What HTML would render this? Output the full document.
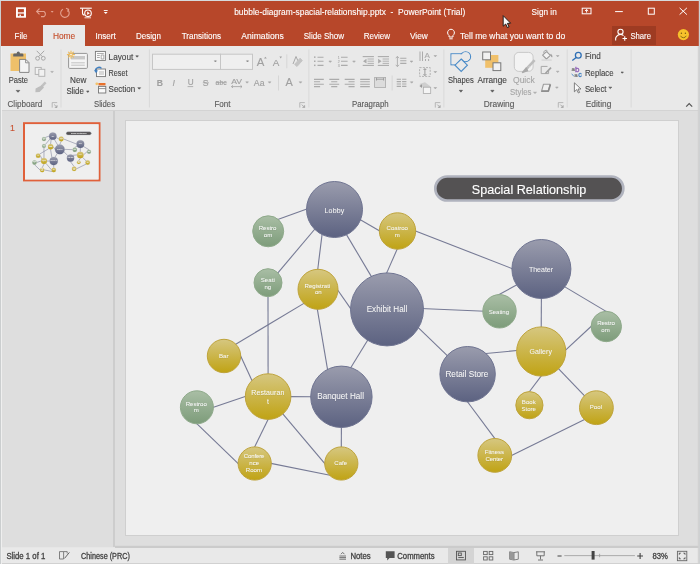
<!DOCTYPE html>
<html><head><meta charset="utf-8">
<style>
*{margin:0;padding:0}
html,body{width:700px;height:564px;overflow:hidden;background:#e6e6e6}
svg{position:absolute;left:0;top:0;display:block;will-change:transform}
text{font-family:"Liberation Sans",sans-serif}
</style></head><body>
<svg width="700" height="564" viewBox="0 0 700 564">
<defs>
<linearGradient id="gd" x1="0" y1="0" x2="0" y2="1"><stop offset="0" stop-color="#9a9cad"/><stop offset="1" stop-color="#5c6281"/></linearGradient>
<linearGradient id="gy" x1="0" y1="0" x2="0" y2="1"><stop offset="0" stop-color="#d6c780"/><stop offset="1" stop-color="#c0a314"/></linearGradient>
<linearGradient id="gg" x1="0" y1="0" x2="0" y2="1"><stop offset="0" stop-color="#a9bea5"/><stop offset="1" stop-color="#7d9c7a"/></linearGradient>
</defs>

<rect x="0" y="0" width="700" height="46" fill="#b7472a"/>
<rect x="0" y="46" width="700" height="64" fill="#e9e9e9"/>
<rect x="0" y="110" width="700" height="1" fill="#d3d3d3"/>
<rect x="0" y="111" width="700" height="436" fill="#dedede"/>
<rect x="0" y="111" width="113" height="436" fill="#dedede"/>
<rect x="113" y="111" width="2" height="436" fill="#cdcdcd"/>
<rect x="115" y="545.8" width="585" height="2.2" fill="#cbcbcb"/>
<rect x="0" y="548" width="700" height="16" fill="#e9e9e9"/>
<rect x="0" y="563.3" width="700" height="0.7" fill="#c8c8c8"/>
<rect x="697.8" y="46" width="1" height="518" fill="#d0d0d0"/>
<rect x="448" y="548" width="26" height="16" fill="#d4d4d4"/>
<rect x="125.5" y="120.5" width="553" height="415" fill="#efefef" stroke="#cfcfcf" stroke-width="1"/>
<rect x="0" y="0" width="1" height="564" fill="#cbcecf"/>
<rect x="1" y="46" width="1" height="518" fill="#efefef"/>
<rect x="0" y="0" width="700" height="1" fill="#d6dadc"/>
<rect x="698.8" y="0" width="1.2" height="564" fill="#cfd1d2"/>
<text x="234.2" y="14.9" font-size="8.8" fill="#fff" stroke="#fff" stroke-width="0.12" textLength="231" lengthAdjust="spacingAndGlyphs" xml:space="preserve">bubble-diagram-spacial-relationship.pptx  -  PowerPoint (Trial)</text>
<text x="531.6" y="15.2" font-size="8.8" fill="#fff" stroke="#fff" stroke-width="0.12" textLength="25.2" lengthAdjust="spacingAndGlyphs">Sign in</text>
<rect x="43" y="25" width="42" height="21" fill="#e9e9e9"/>
<rect x="612" y="26" width="44" height="19" fill="#9e3b22"/>
<text x="14.5" y="38.5" font-size="8.4" fill="#fff" stroke="#fff" stroke-width="0.12" textLength="12.9" lengthAdjust="spacingAndGlyphs">File</text>
<text x="52.9" y="38.5" font-size="8.4" fill="#c44d2a" stroke="#c44d2a" stroke-width="0.12" textLength="22.4" lengthAdjust="spacingAndGlyphs">Home</text>
<text x="95.5" y="38.5" font-size="8.4" fill="#fff" stroke="#fff" stroke-width="0.12" textLength="20.3" lengthAdjust="spacingAndGlyphs">Insert</text>
<text x="136" y="38.5" font-size="8.4" fill="#fff" stroke="#fff" stroke-width="0.12" textLength="25" lengthAdjust="spacingAndGlyphs">Design</text>
<text x="181.7" y="38.5" font-size="8.4" fill="#fff" stroke="#fff" stroke-width="0.12" textLength="39.3" lengthAdjust="spacingAndGlyphs">Transitions</text>
<text x="241.3" y="38.5" font-size="8.4" fill="#fff" stroke="#fff" stroke-width="0.12" textLength="42.5" lengthAdjust="spacingAndGlyphs">Animations</text>
<text x="303.7" y="38.5" font-size="8.4" fill="#fff" stroke="#fff" stroke-width="0.12" textLength="40.5" lengthAdjust="spacingAndGlyphs">Slide Show</text>
<text x="363.7" y="38.5" font-size="8.4" fill="#fff" stroke="#fff" stroke-width="0.12" textLength="26.4" lengthAdjust="spacingAndGlyphs">Review</text>
<text x="410" y="38.5" font-size="8.4" fill="#fff" stroke="#fff" stroke-width="0.12" textLength="17.8" lengthAdjust="spacingAndGlyphs">View</text>
<text x="460" y="38.5" font-size="8.4" fill="#fff" stroke="#fff" stroke-width="0.12" textLength="105.2" lengthAdjust="spacingAndGlyphs">Tell me what you want to do</text>
<text x="630.4" y="38.5" font-size="8.4" fill="#fff" stroke="#fff" stroke-width="0.12" textLength="20.6" lengthAdjust="spacingAndGlyphs">Share</text>
<text x="7.5" y="107.2" font-size="8.6" fill="#5a5a5a" stroke="#5a5a5a" stroke-width="0.12" textLength="34.7" lengthAdjust="spacingAndGlyphs">Clipboard</text>
<text x="94" y="107.2" font-size="8.6" fill="#5a5a5a" stroke="#5a5a5a" stroke-width="0.12" textLength="21" lengthAdjust="spacingAndGlyphs">Slides</text>
<text x="214.4" y="107.2" font-size="8.6" fill="#5a5a5a" stroke="#5a5a5a" stroke-width="0.12" textLength="16.1" lengthAdjust="spacingAndGlyphs">Font</text>
<text x="352" y="107.2" font-size="8.6" fill="#5a5a5a" stroke="#5a5a5a" stroke-width="0.12" textLength="36.7" lengthAdjust="spacingAndGlyphs">Paragraph</text>
<text x="483.7" y="107.2" font-size="8.6" fill="#5a5a5a" stroke="#5a5a5a" stroke-width="0.12" textLength="30.6" lengthAdjust="spacingAndGlyphs">Drawing</text>
<text x="585.8" y="107.2" font-size="8.6" fill="#5a5a5a" stroke="#5a5a5a" stroke-width="0.12" textLength="25.5" lengthAdjust="spacingAndGlyphs">Editing</text>
<rect x="60.5" y="49.5" width="1" height="58" fill="#d9d9d9"/>
<rect x="148.9" y="49.5" width="1" height="58" fill="#d9d9d9"/>
<rect x="308.4" y="49.5" width="1" height="58" fill="#d9d9d9"/>
<rect x="443.4" y="49.5" width="1" height="58" fill="#d9d9d9"/>
<rect x="566.7" y="49.5" width="1" height="58" fill="#d9d9d9"/>
<rect x="630.6" y="49.5" width="1" height="58" fill="#d9d9d9"/>
<text x="8.7" y="83.2" font-size="8.8" fill="#444" stroke="#444" stroke-width="0.12" textLength="19.3" lengthAdjust="spacingAndGlyphs">Paste</text>
<text x="70" y="83.2" font-size="8.8" fill="#444" stroke="#444" stroke-width="0.12" textLength="16.4" lengthAdjust="spacingAndGlyphs">New</text>
<text x="66.4" y="94.2" font-size="8.8" fill="#444" stroke="#444" stroke-width="0.12" textLength="17.4" lengthAdjust="spacingAndGlyphs">Slide</text>
<text x="108.6" y="60" font-size="8.8" fill="#444" stroke="#444" stroke-width="0.12" textLength="24.7" lengthAdjust="spacingAndGlyphs">Layout</text>
<text x="108.6" y="75.5" font-size="8.8" fill="#444" stroke="#444" stroke-width="0.12" textLength="18.9" lengthAdjust="spacingAndGlyphs">Reset</text>
<text x="108.6" y="91.5" font-size="8.8" fill="#444" stroke="#444" stroke-width="0.12" textLength="26.6" lengthAdjust="spacingAndGlyphs">Section</text>
<text x="448" y="83.2" font-size="8.8" fill="#444" stroke="#444" stroke-width="0.12" textLength="25.7" lengthAdjust="spacingAndGlyphs">Shapes</text>
<text x="477.5" y="83.2" font-size="8.8" fill="#444" stroke="#444" stroke-width="0.12" textLength="29.3" lengthAdjust="spacingAndGlyphs">Arrange</text>
<text x="513" y="83.2" font-size="8.8" fill="#a6a6a6" stroke="#a6a6a6" stroke-width="0.12" textLength="21.8" lengthAdjust="spacingAndGlyphs">Quick</text>
<text x="510.1" y="94.5" font-size="8.8" fill="#a6a6a6" stroke="#a6a6a6" stroke-width="0.12" textLength="21.3" lengthAdjust="spacingAndGlyphs">Styles</text>
<text x="584.9" y="59.4" font-size="8.8" fill="#444" stroke="#444" stroke-width="0.12" textLength="15.8" lengthAdjust="spacingAndGlyphs">Find</text>
<text x="584.9" y="76.3" font-size="8.8" fill="#444" stroke="#444" stroke-width="0.12" textLength="28.7" lengthAdjust="spacingAndGlyphs">Replace</text>
<text x="584.9" y="91.8" font-size="8.8" fill="#444" stroke="#444" stroke-width="0.12" textLength="21.6" lengthAdjust="spacingAndGlyphs">Select</text>
<g fill="none" stroke="#fff" stroke-width="1.2">
<rect x="16.6" y="8.1" width="8.8" height="8.8"/>
<rect x="18.4" y="9.4" width="5.2" height="2.6" fill="#b7472a" stroke="#fff" stroke-width="0"/>
</g>
<rect x="16.1" y="7.6" width="9.8" height="9.8" fill="#fff"/>
<rect x="17.9" y="9.1" width="6" height="3.2" fill="#b7472a"/>
<rect x="17.9" y="13.6" width="6" height="2.5" fill="#b7472a"/>
<rect x="19.5" y="14.6" width="1.4" height="1.5" fill="#fff"/>
<g fill="none" stroke="#e3a08e" stroke-width="1.1">
<path d="M37,11.5 L44,11.5 A3,3 0 0 1 44,16.6 L41,16.6"/><path d="M39.5,8.6 L36.6,11.5 L39.5,14.4"/>
<path d="M67.5,9.6 A4.3,4.3 0 1 1 63,9.2"/><path d="M66,8.2 L68.6,9.3 L67.8,12"/>
</g>
<path d="M50.7,11 L53.6,11 L52.15,12.7Z" fill="#e3a08e"/>
<g fill="none" stroke="#fff" stroke-width="1.1">
<path d="M80,8.2 L91.8,8.2"/><path d="M82.5,8.5 L82.5,13 A2,2 0 0 0 84.5,15"/><circle cx="88" cy="13.3" r="3.3"/>
<path d="M84.5,17.8 L91,17.8" stroke-width="0.8"/>
</g>
<path d="M87.2,11.6 L89.8,13.3 L87.2,15Z" fill="#fff"/>
<rect x="103.8" y="10.1" width="3.9" height="0.9" fill="#fff"/><path d="M103.8,12 L107.7,12 L105.75,14Z" fill="#fff"/>
<g fill="none" stroke="#fff" stroke-width="1">
<rect x="582.2" y="8.2" width="8.8" height="5.6"/><path d="M586.6,9.5 L586.6,12.6 M585,11 L586.6,9.5 L588.2,11"/>
<path d="M615.1,11.6 L622.8,11.6"/>
<rect x="648.3" y="8.2" width="6" height="6"/>
<path d="M679.6,7.9 L686.9,14.6 M686.9,7.9 L679.6,14.6"/>
</g>
<path d="M503.2,15.6 L503.2,26.2 L505.7,24 L507.4,27.6 L509,26.9 L507.4,23.4 L510.6,23.2 Z" fill="#fafafa" stroke="#111" stroke-width="0.9" stroke-linejoin="round"/>
<g fill="none" stroke="#fff" stroke-width="1"><path d="M449,37 L449,35.4 A3.4,3.4 0 1 1 453,35.4 L453,37 Z"/><path d="M449.3,38.8 L452.7,38.8"/></g>
<g fill="none" stroke="#fff" stroke-width="1.1"><circle cx="620.5" cy="31.8" r="2.6"/><path d="M615.8,40.5 A4.8,4.8 0 0 1 623.5,35.6"/><path d="M622.5,38.5 L627,38.5 M624.75,36.2 L624.75,40.8"/></g>
<circle cx="683.4" cy="34.6" r="5.6" fill="#f7c12b"/><circle cx="681.4" cy="33.3" r="0.7" fill="#7a5a10"/><circle cx="685.4" cy="33.3" r="0.7" fill="#7a5a10"/><path d="M680.6,35.8 A3,3 0 0 0 686.2,35.8" fill="none" stroke="#7a5a10" stroke-width="0.8"/>
<rect x="10.5" y="53.5" width="15.5" height="17.5" fill="#efc06a"/>
<path d="M13.2,56.4 L13.2,54.6 Q13.2,53.4 14.6,53.4 L16.6,53.4 Q16.8,51.6 18.3,51.6 Q19.8,51.6 20,53.4 L22,53.4 Q23.4,53.4 23.4,54.6 L23.4,56.4Z" fill="#666"/>
<path d="M19.6,59.4 L25.8,59.4 L29,62.6 L29,72.4 L19.6,72.4Z" fill="#f4f4f4" stroke="#7a7a7a" stroke-width="0.9"/>
<path d="M25.6,59.6 L25.6,62.8 L28.8,62.8" fill="none" stroke="#7a7a7a" stroke-width="0.8"/>
<g fill="none" stroke="#a8a8a8" stroke-width="1"><circle cx="37.6" cy="58.3" r="1.9"/><circle cx="43.3" cy="58.3" r="1.9"/><path d="M38.6,56.6 L44.2,50.8 M42.3,56.6 L36.7,50.8"/></g>
<g fill="#f1f1f1" stroke="#b0b0b0" stroke-width="0.9"><rect x="35.2" y="67.4" width="6" height="7"/><rect x="38.8" y="69.3" width="6" height="7"/></g>
<path d="M50.8,71.4 L53.3,71.4 L52.05,72.7Z" fill="#aaa" stroke="#aaa" stroke-width="0.6" stroke-linejoin="round"/>
<path d="M45.6,82.4 L41.6,86.6" stroke="#c2c2c2" stroke-width="2.4"/><path d="M41.8,85.2 L44,87.4 L39.6,92 L35.4,92.2 L35.6,88.6Z" fill="#bdbdbd"/>
<path d="M16.2,90.4 L19.8,90.4 L18,92.3Z" fill="#555" stroke="#555" stroke-width="0.6" stroke-linejoin="round"/>
<path d="M52.2,107.6 L52.2,102.6 L57.2,102.6" fill="none" stroke="#aaa" stroke-width="0.8"/><path d="M54.2,104.6 L57.0,107.39999999999999 M57.0,105.19999999999999 L57.0,107.39999999999999 L54.800000000000004,107.39999999999999" fill="none" stroke="#999" stroke-width="0.8"/>
<path d="M299.8,107.6 L299.8,102.6 L304.8,102.6" fill="none" stroke="#aaa" stroke-width="0.8"/><path d="M301.8,104.6 L304.6,107.39999999999999 M304.6,105.19999999999999 L304.6,107.39999999999999 L302.40000000000003,107.39999999999999" fill="none" stroke="#999" stroke-width="0.8"/>
<path d="M435.3,107.6 L435.3,102.6 L440.3,102.6" fill="none" stroke="#aaa" stroke-width="0.8"/><path d="M437.3,104.6 L440.1,107.39999999999999 M440.1,105.19999999999999 L440.1,107.39999999999999 L437.90000000000003,107.39999999999999" fill="none" stroke="#999" stroke-width="0.8"/>
<path d="M558.3,107.6 L558.3,102.6 L563.3,102.6" fill="none" stroke="#aaa" stroke-width="0.8"/><path d="M560.3,104.6 L563.0999999999999,107.39999999999999 M563.0999999999999,105.19999999999999 L563.0999999999999,107.39999999999999 L560.9,107.39999999999999" fill="none" stroke="#999" stroke-width="0.8"/>
<rect x="68.6" y="53.4" width="18.8" height="15" rx="1" fill="#f4f4f4" stroke="#959595" stroke-width="1"/>
<rect x="71" y="56" width="14" height="3.4" fill="#c8c8c8"/><path d="M71.2,62.8 L84.8,62.8 M71.2,65.2 L84.8,65.2" stroke="#b5b5b5" stroke-width="0.8"/>
<g stroke="#efbd5c" stroke-width="1.1" stroke-linecap="round"><path d="M67.4,54.6 L69.4,54.6 M72.6,54.6 L74.6,54.6 M71,51 L71,53 M71,56.2 L71,58.2 M68.5,52.1 L69.8,53.4 M72.2,55.8 L73.5,57.1 M73.5,52.1 L72.2,53.4 M69.8,55.8 L68.5,57.1"/></g><circle cx="71" cy="54.6" r="1.3" fill="none" stroke="#efbd5c" stroke-width="0.9"/>
<path d="M86.6,91 L89,91 L87.8,92.5Z" fill="#555" stroke="#555" stroke-width="0.6" stroke-linejoin="round"/>
<rect x="95.4" y="51.4" width="10" height="9" fill="#fafafa" stroke="#777" stroke-width="0.9"/><path d="M97,53.5 L103.8,53.5 M97,55.5 L99.8,55.5 M97,57.5 L99.8,57.5 M101.2,55 L103.8,55 L103.8,59 L101.2,59Z" stroke="#999" stroke-width="0.8" fill="none"/>
<path d="M135.8,55.8 L138.4,55.8 L137.1,57.2Z" fill="#555" stroke="#555" stroke-width="0.6" stroke-linejoin="round"/>
<rect x="96.5" y="69" width="9" height="7.6" fill="#fafafa" stroke="#777" stroke-width="0.9"/><path d="M99,72 L104,72 M99,74 L104,74" stroke="#999" stroke-width="0.7"/>
<path d="M95.4,71.5 A3.6,3.6 0 0 1 101.5,68.4" fill="none" stroke="#3f7fc1" stroke-width="1.3"/><path d="M94.2,70 L96,73.3 L98,70.5Z" fill="#3f7fc1"/>
<circle cx="96.8" cy="83.8" r="1.4" fill="#f3c36c"/><rect x="98.5" y="83" width="7" height="2.4" fill="#e8702a"/>
<rect x="98.5" y="86.4" width="7.3" height="6.6" fill="#fafafa" stroke="#777" stroke-width="0.9"/><path d="M98.5,88.6 L105.8,88.6" stroke="#777" stroke-width="0.8"/>
<path d="M137.8,87.7 L140.6,87.7 L139.2,89.2Z" fill="#555" stroke="#555" stroke-width="0.6" stroke-linejoin="round"/>
<rect x="152.5" y="54.2" width="68" height="15.2" fill="#efefef" stroke="#c6c6c6" stroke-width="1"/>
<rect x="220.5" y="54.2" width="32" height="15.2" fill="#efefef" stroke="#c6c6c6" stroke-width="1"/>
<path d="M214.4,60.8 L216.4,60.8 L215.4,62Z M246.5,60.8 L248.5,60.8 L247.5,62Z" fill="#888" stroke="#888" stroke-width="0.6" stroke-linejoin="round"/>
<text x="156.8" y="85.8" font-size="8.6" fill="#a0a0a0" stroke="#a0a0a0" stroke-width="0.12" font-weight="bold">B</text>
<text x="172.6" y="85.8" font-size="8.6" fill="#a0a0a0" stroke="#a0a0a0" stroke-width="0.12" font-style="italic">I</text>
<text x="187.8" y="85.2" font-size="8.2" fill="#a0a0a0" stroke="#a0a0a0" stroke-width="0.12">U</text>
<path d="M187.6,86.6 L193.2,86.6" stroke="#a0a0a0" stroke-width="0.8"/>
<text x="202.8" y="85.8" font-size="8.6" fill="#a0a0a0" stroke="#a0a0a0" stroke-width="0.12">S</text>
<path d="M202.8,82.8 L209,82.8" stroke="#a0a0a0" stroke-width="0.7"/>
<text x="215.6" y="85.4" font-size="7" fill="#a0a0a0" stroke="#a0a0a0" stroke-width="0.12" textLength="11" lengthAdjust="spacingAndGlyphs">abc</text>
<path d="M215.6,82.6 L226.6,82.6" stroke="#a0a0a0" stroke-width="0.7"/>
<text x="231.2" y="83.6" font-size="7.4" fill="#a0a0a0" stroke="#a0a0a0" stroke-width="0.12" textLength="10.8" lengthAdjust="spacingAndGlyphs">AV</text>
<path d="M231.5,86.6 L242,86.6 M233,85.3 L231.5,86.6 L233,87.9 M240.5,85.3 L242,86.6 L240.5,87.9" stroke="#a0a0a0" stroke-width="0.8" fill="none"/>
<text x="253.8" y="86.4" font-size="8.8" fill="#a0a0a0" stroke="#a0a0a0" stroke-width="0.12" textLength="10.7" lengthAdjust="spacingAndGlyphs">Aa</text>
<text x="285.6" y="86.4" font-size="10" fill="#a0a0a0" stroke="#a0a0a0" stroke-width="0.12" textLength="7.3" lengthAdjust="spacingAndGlyphs">A</text>
<path d="M245.8,81.8 L248.4,81.8 L247.10000000000002,83.2Z" fill="#aaa" stroke="#aaa" stroke-width="0.6" stroke-linejoin="round"/>
<path d="M268.3,81.8 L270.90000000000003,81.8 L269.6,83.2Z" fill="#aaa" stroke="#aaa" stroke-width="0.6" stroke-linejoin="round"/>
<path d="M299.2,81.8 L301.8,81.8 L300.5,83.2Z" fill="#aaa" stroke="#aaa" stroke-width="0.6" stroke-linejoin="round"/>
<text x="256.8" y="65.6" font-size="11" fill="#a0a0a0" stroke="#a0a0a0" stroke-width="0.12" textLength="7.6" lengthAdjust="spacingAndGlyphs">A</text>
<path d="M264,58.6 L265.4,56.8 L266.8,58.6Z" fill="#a0a0a0"/>
<text x="272.8" y="65.6" font-size="9.6" fill="#a0a0a0" stroke="#a0a0a0" stroke-width="0.12" textLength="6.6" lengthAdjust="spacingAndGlyphs">A</text>
<path d="M279.4,56.6 L282,56.6 L280.7,58.4Z" fill="#a0a0a0"/>
<rect x="286.3" y="54.3" width="1" height="14" fill="#d6d6d6"/>
<rect x="278" y="75.5" width="1" height="15" fill="#d6d6d6"/>
<g fill="none" stroke="#a0a0a0" stroke-width="0.9"><path d="M293,64 L296,56.5 L298,61"/><path d="M297,66.5 L302.4,60.5 L300,58.2 L294.6,64.4Z" fill="#c4c4c4" stroke="#c4c4c4"/></g>
<rect x="314" y="56.4" width="1.5" height="1.5" fill="#ababab"/>
<rect x="314" y="60.5" width="1.5" height="1.5" fill="#ababab"/>
<rect x="314" y="64.6" width="1.5" height="1.5" fill="#ababab"/>
<path d="M317.5,57.2 L323.5,57.2 M317.5,61.300000000000004 L323.5,61.300000000000004 M317.5,65.4 L323.5,65.4 " stroke="#ababab" stroke-width="1.1" fill="none"/>
<text x="337.8" y="58.6" font-size="3.6" fill="#ababab" stroke="#ababab" stroke-width="0.12">1</text>
<text x="337.8" y="62.7" font-size="3.6" fill="#ababab" stroke="#ababab" stroke-width="0.12">2</text>
<text x="337.8" y="66.8" font-size="3.6" fill="#ababab" stroke="#ababab" stroke-width="0.12">3</text>
<path d="M341,57.2 L347.6,57.2 M341,61.300000000000004 L347.6,61.300000000000004 M341,65.4 L347.6,65.4 " stroke="#ababab" stroke-width="1.1" fill="none"/>
<path d="M328.9,61 L331.5,61 L330.2,62.4Z" fill="#aaa" stroke="#aaa" stroke-width="0.6" stroke-linejoin="round"/>
<path d="M352.7,61 L355.3,61 L354.0,62.4Z" fill="#aaa" stroke="#aaa" stroke-width="0.6" stroke-linejoin="round"/>
<path d="M362.7,56.6 L373.9,56.6 " stroke="#ababab" stroke-width="1.1" fill="none"/>
<path d="M367.5,59.0 L373.9,59.0 M367.5,61.2 L373.9,61.2 M367.5,63.4 L373.9,63.4 " stroke="#ababab" stroke-width="0.9" fill="none"/>
<path d="M362.7,65.4 L373.9,65.4 " stroke="#ababab" stroke-width="1.1" fill="none"/>
<path d="M363,61.2 L366.5,58.8 L366.5,63.6Z" fill="#ababab"/>
<path d="M377.8,56.6 L389.0,56.6 " stroke="#ababab" stroke-width="1.1" fill="none"/>
<path d="M382.6,59.0 L389.0,59.0 M382.6,61.2 L389.0,61.2 M382.6,63.4 L389.0,63.4 " stroke="#ababab" stroke-width="0.9" fill="none"/>
<path d="M377.8,65.4 L389.0,65.4 " stroke="#ababab" stroke-width="1.1" fill="none"/>
<path d="M381.6,61.2 L378.1,58.8 L378.1,63.6Z" fill="#ababab"/>
<path d="M397.4,56.5 L397.4,66.5 M395.8,58.2 L397.4,56.3 L399,58.2 M395.8,64.8 L397.4,66.7 L399,64.8" stroke="#ababab" stroke-width="0.9" fill="none"/>
<path d="M400.2,58.2 L406.4,58.2 M400.2,60.800000000000004 L406.4,60.800000000000004 M400.2,63.400000000000006 L406.4,63.400000000000006 " stroke="#ababab" stroke-width="1.1" fill="none"/>
<path d="M410.2,61 L412.8,61 L411.5,62.4Z" fill="#aaa" stroke="#aaa" stroke-width="0.6" stroke-linejoin="round"/>
<path d="M419.5,52.5 L419.5,52.5 " stroke="#ababab" stroke-width="1.1" fill="none"/>
<path d="M420,51.5 L420,61 M422.5,51.5 L422.5,61" stroke="#ababab" stroke-width="1"/>
<text x="424.6" y="58.4" font-size="7.6" fill="#ababab" stroke="#ababab" stroke-width="0.12" textLength="5.4" lengthAdjust="spacingAndGlyphs">A</text>
<path d="M425.5,59 L425.5,61 M428.6,59 L428.6,61" stroke="#ababab" stroke-width="1"/>
<rect x="419.6" y="67.6" width="10.6" height="8.8" fill="none" stroke="#ababab" stroke-width="0.9" stroke-dasharray="2 1.2"/><path d="M424.9,68.8 L424.9,75.4 M423.5,70 L424.9,68.6 L426.3,70 M423.5,74.2 L424.9,75.6 L426.3,74.2" stroke="#888" stroke-width="0.8" fill="none"/>
<path d="M419.4,84 L425,82.2 L430,86 L430,93 L423.3,93 L423.3,87.5 Z" fill="#cfcfcf"/><rect x="423.3" y="87.2" width="7.4" height="6.2" fill="#f4f4f4" stroke="#ababab" stroke-width="0.8"/><path d="M419.4,86 L422,84.2 L422,88" fill="#999"/>
<path d="M434,55.5 L436.6,55.5 L435.3,56.9Z" fill="#aaa" stroke="#aaa" stroke-width="0.6" stroke-linejoin="round"/>
<path d="M434,71.5 L436.6,71.5 L435.3,72.9Z" fill="#aaa" stroke="#aaa" stroke-width="0.6" stroke-linejoin="round"/>
<path d="M434,87.5 L436.6,87.5 L435.3,88.9Z" fill="#aaa" stroke="#aaa" stroke-width="0.6" stroke-linejoin="round"/>
<path d="M314.0,79.4 L323.8,79.4 M314.0,81.8 L320.1,81.8 M314.0,84.2 L323.8,84.2 M314.0,86.6 L320.1,86.6 " stroke="#ababab" stroke-width="1.1" fill="none"/>
<path d="M329.3,79.4 L339.2,79.4 M331.2,81.8 L337.3,81.8 M329.3,84.2 L339.2,84.2 M331.2,86.6 L337.3,86.6 " stroke="#ababab" stroke-width="1.1" fill="none"/>
<path d="M344.7,79.4 L354.6,79.4 M348.5,81.8 L354.6,81.8 M344.7,84.2 L354.6,84.2 M348.5,86.6 L354.6,86.6 " stroke="#ababab" stroke-width="1.1" fill="none"/>
<path d="M360.2,79.4 L369.8,79.4 M360.2,81.8 L369.8,81.8 M360.2,84.2 L369.8,84.2 M360.2,86.6 L369.8,86.6 " stroke="#ababab" stroke-width="1.1" fill="none"/>
<rect x="374.6" y="77.5" width="11" height="10" fill="#dcdcdc" stroke="#ababab" stroke-width="0.8"/><path d="M376.5,79.2 L383.6,79.2 M376.5,77.8 L376.5,80.6 M383.6,77.8 L383.6,80.6" stroke="#888" stroke-width="0.7"/>
<rect x="391.6" y="75.5" width="1" height="15" fill="#d6d6d6"/>
<path d="M396.7,79.2 L401.0,79.2 M396.7,81.60000000000001 L401.0,81.60000000000001 M396.7,84.0 L401.0,84.0 M396.7,86.4 L401.0,86.4 " stroke="#ababab" stroke-width="1.1" fill="none"/>
<path d="M402.1,79.2 L406.40000000000003,79.2 M402.1,81.60000000000001 L406.40000000000003,81.60000000000001 M402.1,84.0 L406.40000000000003,84.0 M402.1,86.4 L406.40000000000003,86.4 " stroke="#ababab" stroke-width="1.1" fill="none"/>
<path d="M410.4,81.8 L413,81.8 L411.7,83.2Z" fill="#aaa" stroke="#aaa" stroke-width="0.6" stroke-linejoin="round"/>
<g stroke="#4a8bc8" stroke-width="1.1" fill="none"><rect x="451" y="53.8" width="11.6" height="11"/><circle cx="465.6" cy="56.7" r="5"/></g><rect x="451.6" y="54.4" width="10.4" height="9.8" fill="#e9e9e9"/><circle cx="465.6" cy="56.7" r="4.4" fill="#e9e9e9"/><path d="M461.2,59 L467.4,65.2 L461.2,71.4 L455,65.2Z" fill="#e9e9e9" stroke="#4a8bc8" stroke-width="1.1"/>
<path d="M459.3,90.3 L462.5,90.3 L460.9,92.2Z" fill="#555" stroke="#555" stroke-width="0.6" stroke-linejoin="round"/>
<rect x="485.2" y="55" width="13.2" height="12.8" fill="#f0c06a"/>
<rect x="482.7" y="52" width="7.8" height="7.8" fill="#f1f1f1" stroke="#777" stroke-width="1"/>
<rect x="493" y="62.8" width="7.8" height="7.8" fill="#f1f1f1" stroke="#777" stroke-width="1"/>
<path d="M490.8,90.3 L494,90.3 L492.4,92.2Z" fill="#555" stroke="#555" stroke-width="0.6" stroke-linejoin="round"/>
<rect x="514.3" y="52.4" width="18.8" height="19" rx="4.5" fill="#f3f3f3" stroke="#c9c9c9" stroke-width="1"/>
<path d="M534.6,60.2 L526.5,68.8" stroke="#bdbdbd" stroke-width="2.6"/><path d="M526.2,68 L522.2,72.6 L527.6,70.6Z" fill="#a9a9a9" stroke="#a9a9a9" stroke-width="1.2"/><path d="M529,66.4 L531,68.4" stroke="#e9e9e9" stroke-width="0.8"/>
<path d="M533.5,92.2 L536.5,92.2 L535,93.6Z" fill="#aaa" stroke="#aaa" stroke-width="0.6" stroke-linejoin="round"/>
<path d="M542.6,55.2 L546.6,51.6 L550.4,55.4 L546.4,59 Z" fill="#f3f3f3" stroke="#9d9d9d" stroke-width="1.1" stroke-linejoin="round"/><path d="M544.2,53.6 A2,2 0 0 1 547.6,51.2" fill="none" stroke="#9d9d9d" stroke-width="0.9"/><path d="M550.6,54.2 Q552.4,56 551.6,57.2" fill="none" stroke="#9d9d9d" stroke-width="1.2"/><rect x="541.5" y="59.4" width="10.2" height="1.4" fill="#d6d6d6"/>
<path d="M547.5,66.4 L541.2,66.4 L541.2,73.6 L548.6,73.6 L548.6,70.4" fill="none" stroke="#a6a6a6" stroke-width="1"/><path d="M545.2,72.4 L550.4,67 L551.6,68.2 L546.4,73.4 L544.8,73.8Z" fill="#a0a0a0"/>
<path d="M543.5,84.2 L550.2,84.2 L548.2,91.4 L541.5,91.4Z" fill="#efefef" stroke="#9a9a9a" stroke-width="1.1" stroke-linejoin="round"/><path d="M541.8,91 L548.4,91 L550.4,84.6" fill="none" stroke="#8a8a8a" stroke-width="1.6" stroke-linejoin="round"/>
<path d="M556.4,55.5 L559.0,55.5 L557.6999999999999,56.9Z" fill="#aaa" stroke="#aaa" stroke-width="0.6" stroke-linejoin="round"/>
<path d="M556.4,71.2 L559.0,71.2 L557.6999999999999,72.60000000000001Z" fill="#aaa" stroke="#aaa" stroke-width="0.6" stroke-linejoin="round"/>
<path d="M555.6,87 L558.2,87 L556.9,88.4Z" fill="#aaa" stroke="#aaa" stroke-width="0.6" stroke-linejoin="round"/>
<g fill="none" stroke="#2e6fb5" stroke-width="1.3"><circle cx="578.3" cy="55.3" r="2.9"/><path d="M576.2,57.5 L572.3,60.5"/></g>
<text x="571.4" y="71.4" font-size="6.2" fill="#6e6e6e" stroke="#6e6e6e" stroke-width="0.2">a</text>
<text x="575" y="72.2" font-size="8" fill="#8b5bb5" stroke="#8b5bb5" stroke-width="0.3">b</text>
<text x="574.2" y="77.2" font-size="6.2" fill="#6e6e6e" stroke="#6e6e6e" stroke-width="0.2">a</text>
<text x="578.2" y="77.2" font-size="7" fill="#3d7cc0" stroke="#3d7cc0" stroke-width="0.3">c</text>
<path d="M571.6,74 L573.8,76" stroke="#3b7fc4" stroke-width="0.9"/>
<path d="M574.4,82.8 L574.4,91.8 L576.7,89.6 L578.4,93 L579.6,92.4 L578,89 L581,89Z" fill="#fafafa" stroke="#666" stroke-width="0.8"/>
<path d="M621,72 L623.4,72 L622.2,73.3Z M608.8,87.2 L611.8,87.2 L610.3,88.6Z" fill="#555" stroke="#555" stroke-width="0.6" stroke-linejoin="round"/>
<path d="M686.2,106.6 L689.2,103.6 L692.2,106.6" fill="none" stroke="#555" stroke-width="1.2"/>
<g fill="none" stroke="#666" stroke-width="0.8"><path d="M59.5,551.6 L63.6,551.6 L63.6,559 L59.5,559Z M63.6,551.6 L67.2,551.6 L67.2,553.5"/><path d="M64.5,558.4 L69.4,552.4" stroke-width="1"/></g>
<g stroke="#555" stroke-width="0.8" fill="none"><path d="M339.4,556 L346,556 M339.4,557.6 L346,557.6 M339.4,559.2 L346,559.2"/><path d="M341,554.2 L342.7,552.4 L344.4,554.2"/></g>
<path d="M385.8,551.2 L394.6,551.2 L394.6,558 L389.5,558 L387.2,560.4 L387.2,558 L385.8,558Z" fill="#555"/>
<g fill="none" stroke="#555" stroke-width="0.9"><rect x="456.5" y="551.3" width="9" height="8.6"/><rect x="458.3" y="553" width="3" height="2.6"/><path d="M458.3,557.5 L463.8,557.5"/></g>
<g fill="none" stroke="#666" stroke-width="0.9"><rect x="483.6" y="551.4" width="3.6" height="3.2"/><rect x="489.2" y="551.4" width="3.6" height="3.2"/><rect x="483.6" y="556.8" width="3.6" height="3.2"/><rect x="489.2" y="556.8" width="3.6" height="3.2"/></g>
<g fill="none" stroke="#777" stroke-width="0.9"><path d="M509.6,551.8 L513.8,552.6 L513.8,560 L509.6,559.2Z M513.8,552.6 L518.3,551.8 L518.3,559.2 L513.8,560Z"/></g><path d="M509.6,551.8 L513.8,552.6 L513.8,560 L509.6,559.2Z" fill="#999"/>
<g fill="none" stroke="#666" stroke-width="0.9"><path d="M536,551.8 L545,551.8 M536.8,551.8 L536.8,555.8 L544.2,555.8 L544.2,551.8 M540.5,555.8 L540.5,559.4 M538,560 L543,560"/></g>
<path d="M557.5,556 L561.6,556 M637.2,556 L643,556 M640.1,553.1 L640.1,558.9" stroke="#444" stroke-width="1.1"/>
<rect x="564.3" y="555.3" width="70.6" height="0.8" fill="#9a9a9a"/>
<rect x="591.6" y="551" width="3" height="8.6" fill="#444"/>
<rect x="599.3" y="553.8" width="0.8" height="3.4" fill="#999"/>
<g fill="none" stroke="#666" stroke-width="0.9"><rect x="677.4" y="551.3" width="9.4" height="9.4"/></g><g fill="#666"><path d="M678.8,552.7 L681.3,552.7 L678.8,555.2Z M685.4,552.7 L682.9,552.7 L685.4,555.2Z M678.8,559.3 L681.3,559.3 L678.8,556.8Z M685.4,559.3 L682.9,559.3 L685.4,556.8Z"/></g>
<text x="6.4" y="559" font-size="8.2" fill="#444" stroke="#444" stroke-width="0.3" textLength="38.9" lengthAdjust="spacingAndGlyphs">Slide 1 of 1</text>
<text x="81.1" y="559" font-size="8.2" fill="#444" stroke="#444" stroke-width="0.3" textLength="48.7" lengthAdjust="spacingAndGlyphs">Chinese (PRC)</text>
<text x="350.4" y="559" font-size="8.2" fill="#444" stroke="#444" stroke-width="0.3" textLength="20.3" lengthAdjust="spacingAndGlyphs">Notes</text>
<text x="397.3" y="559" font-size="8.2" fill="#444" stroke="#444" stroke-width="0.3" textLength="37.2" lengthAdjust="spacingAndGlyphs">Comments</text>
<text x="652.5" y="559" font-size="8.2" fill="#444" stroke="#444" stroke-width="0.3" textLength="15.5" lengthAdjust="spacingAndGlyphs">83%</text>
<g stroke="#767a95" stroke-width="1.1" fill="none" id="dl">
<line x1="275.0" y1="220.4" x2="309.6" y2="208.0"/>
<line x1="276.0" y1="275.1" x2="316.6" y2="227.0"/>
<line x1="322.3" y1="232.4" x2="317.5" y2="271.4"/>
<line x1="345.6" y1="233.1" x2="372.6" y2="278.6"/>
<line x1="359.5" y1="219.2" x2="381.9" y2="232.2"/>
<line x1="398.3" y1="246.6" x2="385.5" y2="275.6"/>
<line x1="412.9" y1="229.9" x2="514.2" y2="269.4"/>
<line x1="335.4" y1="286.8" x2="352.4" y2="311.1"/>
<line x1="306.4" y1="301.9" x2="233.2" y2="345.7"/>
<line x1="316.9" y1="306.7" x2="327.9" y2="371.6"/>
<line x1="268.0" y1="293.7" x2="268.1" y2="376.8"/>
<line x1="239.4" y1="353.3" x2="253.2" y2="383.2"/>
<line x1="210.6" y1="408.3" x2="248.1" y2="395.6"/>
<line x1="287.9" y1="396.6" x2="313.7" y2="396.8"/>
<line x1="269.4" y1="416.7" x2="253.4" y2="449.6"/>
<line x1="280.7" y1="411.3" x2="326.7" y2="465.8"/>
<line x1="194.7" y1="421.7" x2="240.3" y2="465.6"/>
<line x1="268.4" y1="462.9" x2="332.5" y2="475.8"/>
<line x1="341.4" y1="424.5" x2="341.3" y2="449.9"/>
<line x1="368.7" y1="338.5" x2="349.5" y2="369.7"/>
<line x1="420.7" y1="308.5" x2="485.0" y2="311.2"/>
<line x1="416.7" y1="326.2" x2="449.1" y2="357.3"/>
<line x1="518.3" y1="284.0" x2="496.4" y2="296.0"/>
<line x1="541.4" y1="295.5" x2="541.2" y2="329.9"/>
<line x1="562.8" y1="285.6" x2="608.6" y2="312.9"/>
<line x1="483.3" y1="353.8" x2="519.3" y2="350.3"/>
<line x1="593.2" y1="324.5" x2="564.2" y2="351.3"/>
<line x1="543.0" y1="373.7" x2="527.6" y2="394.0"/>
<line x1="556.5" y1="366.7" x2="586.5" y2="397.9"/>
<line x1="465.8" y1="399.5" x2="496.6" y2="440.9"/>
<line x1="509.0" y1="456.7" x2="587.1" y2="418.3"/>
</g>
<g id="dg">
<circle cx="334.5" cy="209.5" r="28" fill="url(#gd)" stroke="#6f7491" stroke-width="1"/>
<circle cx="387" cy="309.4" r="36.5" fill="url(#gd)" stroke="#6f7491" stroke-width="1"/>
<circle cx="341.4" cy="396.8" r="30.7" fill="url(#gd)" stroke="#6f7491" stroke-width="1"/>
<circle cx="541.4" cy="269" r="29.5" fill="url(#gd)" stroke="#6f7491" stroke-width="1"/>
<circle cx="467.6" cy="374.2" r="27.7" fill="url(#gd)" stroke="#6f7491" stroke-width="1"/>
<circle cx="397.5" cy="231" r="18.2" fill="url(#gy)" stroke="#bfa43c" stroke-width="1"/>
<circle cx="318" cy="289.3" r="20" fill="url(#gy)" stroke="#bfa43c" stroke-width="1"/>
<circle cx="224" cy="356" r="16.7" fill="url(#gy)" stroke="#bfa43c" stroke-width="1"/>
<circle cx="268.1" cy="396.6" r="22.8" fill="url(#gy)" stroke="#bfa43c" stroke-width="1"/>
<circle cx="254.7" cy="463.5" r="16.6" fill="url(#gy)" stroke="#bfa43c" stroke-width="1"/>
<circle cx="341.3" cy="463.5" r="16.6" fill="url(#gy)" stroke="#bfa43c" stroke-width="1"/>
<circle cx="541.2" cy="351.5" r="24.6" fill="url(#gy)" stroke="#bfa43c" stroke-width="1"/>
<circle cx="529.4" cy="405.2" r="13.6" fill="url(#gy)" stroke="#bfa43c" stroke-width="1"/>
<circle cx="596.4" cy="407.7" r="16.9" fill="url(#gy)" stroke="#bfa43c" stroke-width="1"/>
<circle cx="494.8" cy="455.4" r="16.9" fill="url(#gy)" stroke="#bfa43c" stroke-width="1"/>
<circle cx="268.2" cy="231.3" r="15.5" fill="url(#gg)" stroke="#8faa8b" stroke-width="1"/>
<circle cx="268" cy="282.7" r="14" fill="url(#gg)" stroke="#8faa8b" stroke-width="1"/>
<circle cx="196.9" cy="407.3" r="16.5" fill="url(#gg)" stroke="#8faa8b" stroke-width="1"/>
<circle cx="499.5" cy="311.3" r="16.7" fill="url(#gg)" stroke="#8faa8b" stroke-width="1"/>
<circle cx="606.3" cy="326.5" r="15.2" fill="url(#gg)" stroke="#8faa8b" stroke-width="1"/>
<rect x="435.3" y="176.5" width="188" height="24" rx="12" fill="#545253" stroke="#b0b3be" stroke-width="2.7"/>
<text x="529" y="193.6" font-size="13.2" fill="#fff" stroke="#fff" stroke-width="0.12" textLength="114.5" lengthAdjust="spacingAndGlyphs" text-anchor="middle">Spacial Relationship</text>
<text x="334.7" y="213.0" font-size="7.0" fill="#000" textLength="19.6" lengthAdjust="spacing" text-anchor="middle" fill-opacity="0.08">Lobby</text>
<text x="334.4" y="212.5" font-size="7.0" fill="#f8f8f8" stroke="#f8f8f8" stroke-width="0.05" textLength="19.6" lengthAdjust="spacing" text-anchor="middle">Lobby</text>
<text x="387.3" y="312.2" font-size="9" fill="#000" textLength="40.6" lengthAdjust="spacingAndGlyphs" text-anchor="middle" fill-opacity="0.08">Exhibit Hall</text>
<text x="387" y="311.7" font-size="9" fill="#f8f8f8" stroke="#f8f8f8" stroke-width="0.05" textLength="40.6" lengthAdjust="spacingAndGlyphs" text-anchor="middle">Exhibit Hall</text>
<text x="340.90000000000003" y="399.9" font-size="9" fill="#000" textLength="46.7" lengthAdjust="spacingAndGlyphs" text-anchor="middle" fill-opacity="0.08">Banquet Hall</text>
<text x="340.6" y="399.4" font-size="9" fill="#f8f8f8" stroke="#f8f8f8" stroke-width="0.05" textLength="46.7" lengthAdjust="spacingAndGlyphs" text-anchor="middle">Banquet Hall</text>
<text x="541.3" y="272.3" font-size="7.0" fill="#000" textLength="24.1" lengthAdjust="spacing" text-anchor="middle" fill-opacity="0.08">Theater</text>
<text x="541" y="271.8" font-size="7.0" fill="#f8f8f8" stroke="#f8f8f8" stroke-width="0.05" textLength="24.1" lengthAdjust="spacing" text-anchor="middle">Theater</text>
<text x="467.2" y="377.6" font-size="9" fill="#000" textLength="43.0" lengthAdjust="spacingAndGlyphs" text-anchor="middle" fill-opacity="0.08">Retail Store</text>
<text x="466.9" y="377.1" font-size="9" fill="#f8f8f8" stroke="#f8f8f8" stroke-width="0.05" textLength="43.0" lengthAdjust="spacingAndGlyphs" text-anchor="middle">Retail Store</text>
<text x="397.6" y="230.3" font-size="6.1" fill="#000" textLength="21.4" lengthAdjust="spacing" text-anchor="middle" fill-opacity="0.08">Coatroo</text>
<text x="397.3" y="229.8" font-size="6.1" fill="#f8f8f8" stroke="#f8f8f8" stroke-width="0.05" textLength="21.4" lengthAdjust="spacing" text-anchor="middle">Coatroo</text>
<text x="397.7" y="237.2" font-size="6.1" fill="#000" text-anchor="middle" fill-opacity="0.08">m</text>
<text x="397.4" y="236.7" font-size="6.1" fill="#f8f8f8" stroke="#f8f8f8" stroke-width="0.05" text-anchor="middle">m</text>
<text x="267.90000000000003" y="230.9" font-size="6.1" fill="#000" textLength="17.7" lengthAdjust="spacing" text-anchor="middle" fill-opacity="0.08">Restro</text>
<text x="267.6" y="230.4" font-size="6.1" fill="#f8f8f8" stroke="#f8f8f8" stroke-width="0.05" textLength="17.7" lengthAdjust="spacing" text-anchor="middle">Restro</text>
<text x="268.3" y="237.5" font-size="6.1" fill="#000" text-anchor="middle" fill-opacity="0.08">om</text>
<text x="268" y="237" font-size="6.1" fill="#f8f8f8" stroke="#f8f8f8" stroke-width="0.05" text-anchor="middle">om</text>
<text x="268.1" y="282.8" font-size="6.1" fill="#000" textLength="14.2" lengthAdjust="spacing" text-anchor="middle" fill-opacity="0.08">Seati</text>
<text x="267.8" y="282.3" font-size="6.1" fill="#f8f8f8" stroke="#f8f8f8" stroke-width="0.05" textLength="14.2" lengthAdjust="spacing" text-anchor="middle">Seati</text>
<text x="268.1" y="289.1" font-size="6.1" fill="#000" text-anchor="middle" fill-opacity="0.08">ng</text>
<text x="267.8" y="288.6" font-size="6.1" fill="#f8f8f8" stroke="#f8f8f8" stroke-width="0.05" text-anchor="middle">ng</text>
<text x="317.7" y="288.5" font-size="6.1" fill="#000" textLength="25.7" lengthAdjust="spacing" text-anchor="middle" fill-opacity="0.08">Registrati</text>
<text x="317.4" y="288" font-size="6.1" fill="#f8f8f8" stroke="#f8f8f8" stroke-width="0.05" textLength="25.7" lengthAdjust="spacing" text-anchor="middle">Registrati</text>
<text x="318.6" y="294.8" font-size="6.1" fill="#000" text-anchor="middle" fill-opacity="0.08">on</text>
<text x="318.3" y="294.3" font-size="6.1" fill="#f8f8f8" stroke="#f8f8f8" stroke-width="0.05" text-anchor="middle">on</text>
<text x="224.0" y="358.9" font-size="6.1" fill="#000" text-anchor="middle" fill-opacity="0.08">Bar</text>
<text x="223.7" y="358.4" font-size="6.1" fill="#f8f8f8" stroke="#f8f8f8" stroke-width="0.05" text-anchor="middle">Bar</text>
<text x="268.1" y="395.8" font-size="7.0" fill="#000" textLength="33.0" lengthAdjust="spacing" text-anchor="middle" fill-opacity="0.08">Restauran</text>
<text x="267.8" y="395.3" font-size="7.0" fill="#f8f8f8" stroke="#f8f8f8" stroke-width="0.05" textLength="33.0" lengthAdjust="spacing" text-anchor="middle">Restauran</text>
<text x="268.40000000000003" y="404.1" font-size="7.0" fill="#000" text-anchor="middle" fill-opacity="0.08">t</text>
<text x="268.1" y="403.6" font-size="7.0" fill="#f8f8f8" stroke="#f8f8f8" stroke-width="0.05" text-anchor="middle">t</text>
<text x="196.60000000000002" y="406.4" font-size="6.1" fill="#000" textLength="21.1" lengthAdjust="spacing" text-anchor="middle" fill-opacity="0.08">Restroo</text>
<text x="196.3" y="405.9" font-size="6.1" fill="#f8f8f8" stroke="#f8f8f8" stroke-width="0.05" textLength="21.1" lengthAdjust="spacing" text-anchor="middle">Restroo</text>
<text x="196.5" y="412.7" font-size="6.1" fill="#000" text-anchor="middle" fill-opacity="0.08">m</text>
<text x="196.2" y="412.2" font-size="6.1" fill="#f8f8f8" stroke="#f8f8f8" stroke-width="0.05" text-anchor="middle">m</text>
<text x="254.4" y="458.8" font-size="6.1" fill="#000" textLength="20.7" lengthAdjust="spacing" text-anchor="middle" fill-opacity="0.08">Confere</text>
<text x="254.1" y="458.3" font-size="6.1" fill="#f8f8f8" stroke="#f8f8f8" stroke-width="0.05" textLength="20.7" lengthAdjust="spacing" text-anchor="middle">Confere</text>
<text x="254.5" y="465.5" font-size="6.1" fill="#000" text-anchor="middle" fill-opacity="0.08">nce</text>
<text x="254.2" y="465" font-size="6.1" fill="#f8f8f8" stroke="#f8f8f8" stroke-width="0.05" text-anchor="middle">nce</text>
<text x="254.20000000000002" y="472.4" font-size="6.1" fill="#000" text-anchor="middle" fill-opacity="0.08">Room</text>
<text x="253.9" y="471.9" font-size="6.1" fill="#f8f8f8" stroke="#f8f8f8" stroke-width="0.05" text-anchor="middle">Room</text>
<text x="341.0" y="465.5" font-size="6.1" fill="#000" text-anchor="middle" fill-opacity="0.08">Cafe</text>
<text x="340.7" y="465" font-size="6.1" fill="#f8f8f8" stroke="#f8f8f8" stroke-width="0.05" text-anchor="middle">Cafe</text>
<text x="499.2" y="314.4" font-size="6.1" fill="#000" textLength="20.3" lengthAdjust="spacing" text-anchor="middle" fill-opacity="0.08">Seating</text>
<text x="498.9" y="313.9" font-size="6.1" fill="#f8f8f8" stroke="#f8f8f8" stroke-width="0.05" textLength="20.3" lengthAdjust="spacing" text-anchor="middle">Seating</text>
<text x="606.3" y="325.9" font-size="6.1" fill="#000" textLength="17.6" lengthAdjust="spacing" text-anchor="middle" fill-opacity="0.08">Restro</text>
<text x="606" y="325.4" font-size="6.1" fill="#f8f8f8" stroke="#f8f8f8" stroke-width="0.05" textLength="17.6" lengthAdjust="spacing" text-anchor="middle">Restro</text>
<text x="605.9" y="332.4" font-size="6.1" fill="#000" text-anchor="middle" fill-opacity="0.08">om</text>
<text x="605.6" y="331.9" font-size="6.1" fill="#f8f8f8" stroke="#f8f8f8" stroke-width="0.05" text-anchor="middle">om</text>
<text x="541.0" y="354.4" font-size="7.0" fill="#000" textLength="22.5" lengthAdjust="spacing" text-anchor="middle" fill-opacity="0.08">Gallery</text>
<text x="540.7" y="353.9" font-size="7.0" fill="#f8f8f8" stroke="#f8f8f8" stroke-width="0.05" textLength="22.5" lengthAdjust="spacing" text-anchor="middle">Gallery</text>
<text x="529.0999999999999" y="404.3" font-size="6.1" fill="#000" text-anchor="middle" fill-opacity="0.08">Book</text>
<text x="528.8" y="403.8" font-size="6.1" fill="#f8f8f8" stroke="#f8f8f8" stroke-width="0.05" text-anchor="middle">Book</text>
<text x="529.0" y="411.2" font-size="6.1" fill="#000" textLength="14.6" lengthAdjust="spacing" text-anchor="middle" fill-opacity="0.08">Store</text>
<text x="528.7" y="410.7" font-size="6.1" fill="#f8f8f8" stroke="#f8f8f8" stroke-width="0.05" textLength="14.6" lengthAdjust="spacing" text-anchor="middle">Store</text>
<text x="596.1999999999999" y="409.8" font-size="6.1" fill="#000" text-anchor="middle" fill-opacity="0.08">Pool</text>
<text x="595.9" y="409.3" font-size="6.1" fill="#f8f8f8" stroke="#f8f8f8" stroke-width="0.05" text-anchor="middle">Pool</text>
<text x="494.7" y="454.4" font-size="6.1" fill="#000" textLength="19.1" lengthAdjust="spacing" text-anchor="middle" fill-opacity="0.08">Fitness</text>
<text x="494.4" y="453.9" font-size="6.1" fill="#f8f8f8" stroke="#f8f8f8" stroke-width="0.05" textLength="19.1" lengthAdjust="spacing" text-anchor="middle">Fitness</text>
<text x="494.6" y="461.5" font-size="6.1" fill="#000" textLength="17.6" lengthAdjust="spacing" text-anchor="middle" fill-opacity="0.08">Center</text>
<text x="494.3" y="461" font-size="6.1" fill="#f8f8f8" stroke="#f8f8f8" stroke-width="0.05" textLength="17.6" lengthAdjust="spacing" text-anchor="middle">Center</text>
</g>
<rect x="24" y="123.2" width="75.5" height="57.2" fill="none" stroke="#e0603a" stroke-width="2"/>
<rect x="25" y="124.3" width="73.6" height="55.2" fill="#efefef"/>
<g transform="translate(25,124.3) scale(0.13309) translate(-125.5,-120.5)"><g stroke="#7a7e98" stroke-width="4.2" fill="none">
<line x1="277.8" y1="219.4" x2="306.8" y2="209.0"/>
<line x1="277.9" y1="272.8" x2="314.7" y2="229.3"/>
<line x1="321.9" y1="235.4" x2="317.9" y2="268.4"/>
<line x1="347.1" y1="235.7" x2="371.1" y2="276.0"/>
<line x1="362.1" y1="220.7" x2="379.3" y2="230.7"/>
<line x1="397.1" y1="249.3" x2="386.7" y2="272.9"/>
<line x1="415.7" y1="231.0" x2="511.4" y2="268.3"/>
<line x1="337.1" y1="289.3" x2="350.7" y2="308.6"/>
<line x1="303.9" y1="303.4" x2="235.8" y2="344.2"/>
<line x1="317.4" y1="309.7" x2="327.4" y2="368.6"/>
<line x1="268.0" y1="296.7" x2="268.1" y2="373.8"/>
<line x1="240.7" y1="356.0" x2="252.0" y2="380.5"/>
<line x1="213.4" y1="407.3" x2="245.3" y2="396.6"/>
<line x1="290.9" y1="396.6" x2="310.7" y2="396.8"/>
<line x1="268.1" y1="419.4" x2="254.7" y2="446.9"/>
<line x1="282.6" y1="413.6" x2="324.8" y2="463.5"/>
<line x1="196.9" y1="423.8" x2="238.1" y2="463.5"/>
<line x1="271.3" y1="463.5" x2="329.6" y2="475.2"/>
<line x1="341.4" y1="427.5" x2="341.3" y2="446.9"/>
<line x1="367.1" y1="341.1" x2="351.1" y2="367.1"/>
<line x1="423.7" y1="308.6" x2="482.0" y2="311.1"/>
<line x1="418.9" y1="328.3" x2="446.9" y2="355.2"/>
<line x1="515.7" y1="285.4" x2="499.0" y2="294.6"/>
<line x1="541.4" y1="298.5" x2="541.2" y2="326.9"/>
<line x1="565.4" y1="287.1" x2="606.0" y2="311.4"/>
<line x1="486.3" y1="353.5" x2="516.3" y2="350.6"/>
<line x1="591.0" y1="326.5" x2="566.4" y2="349.3"/>
<line x1="541.2" y1="376.1" x2="529.4" y2="391.6"/>
<line x1="558.6" y1="368.9" x2="584.4" y2="395.7"/>
<line x1="467.6" y1="401.9" x2="494.8" y2="438.5"/>
<line x1="511.7" y1="455.4" x2="584.4" y2="419.7"/>
</g><use href="#dg"/></g>
<text x="9.9" y="130.9" font-size="8.8" fill="#c8502f" stroke="#c8502f" stroke-width="0.12">1</text>
</svg></body></html>
